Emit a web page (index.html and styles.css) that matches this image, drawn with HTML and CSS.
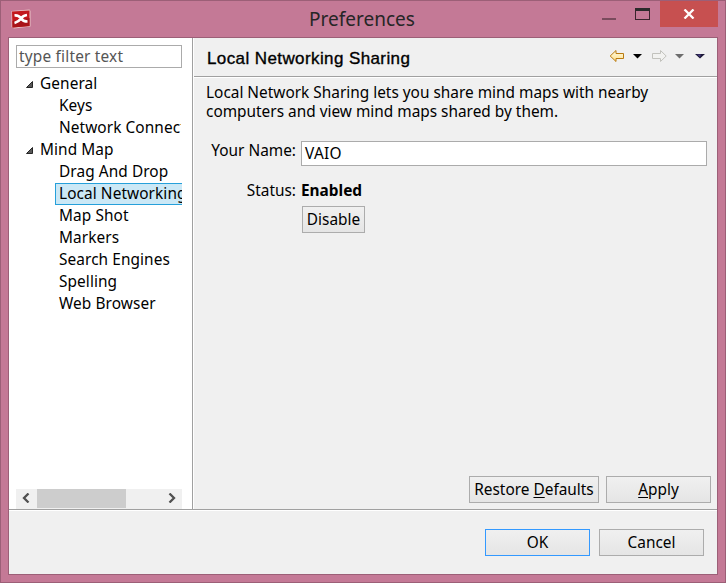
FILE: index.html
```html
<!DOCTYPE html>
<html lang="en">
<head>
<meta charset="utf-8">
<title>Preferences</title>
<link rel="stylesheet" href="styles.css">
</head>
<body>
<div class="window">
  <header class="titlebar">
    <svg class="app-icon" width="20" height="20" viewBox="0 0 20 20"><path d="M.5 2 18.500 .5 19.500 2V17.500L3 19.500 .5 18Z" fill="#e9c3c6"/><path d="M1 2.500 18.500 1.500V17L1.500 18.500Z" fill="#c3181d"/><path d="M1.500 12 18.500 9V17L1.500 18.500Z" fill="#a91319"/><path d="M3.500 6.500Q7.500 6 10 9.500Q12 12.500 16.500 12.500M3.500 14Q7.500 13 10 9.500Q12 6.500 16 6" fill="none" stroke="#fff" stroke-width="2.700"/></svg>
    <h1>Preferences</h1>
    <div class="controls">
      <span class="minimize"></span><span class="maximize"></span>
      <button class="close" aria-label="Close"><svg width="12" height="10" viewBox="0 0 12 10"><path d="M1.500 .5 10.500 9.500M10.500 .5 1.500 9.500" stroke="#fff" stroke-width="2.300"/></svg></button>
    </div>
  </header>
  <div class="client">
    <div class="upper">
      <aside class="sidebar">
        <div class="filter">type filter text</div>
        <ul class="tree">
          <li class="group"><svg width="7" height="7" viewBox="0 0 7 7"><path d="M6.500 .5V6.500H.5Z" fill="#595959" stroke="#262626"/></svg><span>General</span></li>
          <li><span>Keys</span></li>
          <li><span>Network Connections</span></li>
          <li class="group"><svg width="7" height="7" viewBox="0 0 7 7"><path d="M6.500 .5V6.500H.5Z" fill="#595959" stroke="#262626"/></svg><span>Mind Map</span></li>
          <li><span>Drag And Drop</span></li>
          <li class="selected"><span>Local Networking</span></li>
          <li><span>Map Shot</span></li>
          <li><span>Markers</span></li>
          <li><span>Search Engines</span></li>
          <li><span>Spelling</span></li>
          <li><span>Web Browser</span></li>
        </ul>
        <div class="scrollbar">
          <svg width="8" height="10" viewBox="0 0 8 10"><path d="M6.500 .5 2 5 6.500 9.500" fill="none" stroke="#505050" stroke-width="2.300"/></svg>
          <div class="thumb"></div>
          <svg width="8" height="10" viewBox="0 0 8 10"><path d="M1.500 .5 6 5 1.500 9.500" fill="none" stroke="#505050" stroke-width="2.300"/></svg>
        </div>
      </aside>
      <main class="page">
        <div class="page-head">
          <h2>Local Networking Sharing</h2>
          <svg width="98" height="14" viewBox="0 0 98 14"><defs><linearGradient id="gold" x2="0" y2="1"><stop stop-color="#fffbe4"/><stop offset="1" stop-color="#ffe08a"/></linearGradient></defs><path d="M.2 7 6 1.500V4.500H13.500V9.500H6V12.500Z" fill="url(#gold)" stroke="#b97a11"/><path d="M23 5H32L27.500 9.500Z" fill="#000"/><path d="M56.200 7 50.500 1.500V4.500H42.500V9.500H50.500V12.500Z" fill="#f2f2f0" stroke="#c2c2bd"/><path d="M65 5H74L69.500 9.500Z" fill="#6d6d6d"/><path d="M85 5H95L90 9.500Z" fill="#1c1838"/><path d="M87 5.500H91L90 8Z" fill="#493d86"/></svg>
        </div>
        <div class="content">
          <p>Local Network Sharing lets you share mind maps with nearby<br>computers and view mind maps shared by them.</p>
          <div class="form">
            <label>Your Name:</label><div class="field">VAIO</div>
            <span class="status">Status:</span><b>Enabled</b>
            <button class="btn disable">Disable</button>
          </div>
          <div class="actions"><button class="btn restore"><span>Restore <u>D</u>efaults</span></button><button class="btn"><span><u>A</u>pply</span></button></div>
        </div>
      </main>
    </div>
    <footer class="footer"><button class="btn ok">OK</button><button class="btn">Cancel</button></footer>
  </div>
</div>
</body>
</html>
```
FILE: styles.css
```css
* { box-sizing: border-box; }
body { margin: 0; font: 15.4px/22px "Noto Sans", sans-serif; color: #000; overflow: hidden; }
h1, h2, p, ul { margin: 0; padding: 0; }
button { font: inherit; color: inherit; padding: 0; }

.window { width: 726px; height: 583px; background: #c47996; border: 1px solid #9c5f77; padding: 0 7px 7px; }

.titlebar { height: 36px; display: grid; grid-template-columns: 150px 1fr 152px; }
.app-icon { margin: 8px 0 0 3px; }
h1 { font-weight: 400; font-size: 19px; line-height: 37px; text-align: center; color: #262626; }
.controls { display: flex; margin-left: 2px; }
.minimize { width: 14px; height: 2px; margin: 17px 0 0 34px; background: #7a4b5d; flex: none; }
.maximize { width: 15px; height: 12px; margin: 7px 0 0 19px; border: 1px solid #3a242c; border-top: 3px solid #2b2b2b; flex: none; }
.close { width: 58px; height: 26px; margin-left: 10px; border: 0; background: #c75050; display: flex; align-items: center; justify-content: center; flex: none; }

.client { height: 538px; border: 1px solid #9c5f77; background: #f0f0f0; }
.upper { height: 472px; border-bottom: 1px solid #a0a0a0; display: flex; }

.sidebar { width: 184px; background: #fff; border-right: 1px solid #a0a0a0; padding: 7px 10px 0 7px; display: flex; flex-direction: column; flex: none; }
.filter { height: 23px; border: 1px solid #ababab; padding-left: 2px; line-height: 22px; letter-spacing: .2px; color: #555; flex: none; }
.tree { list-style: none; margin-top: 5px; overflow: hidden; letter-spacing: .08px; }
.tree li { height: 22px; line-height: 20px; margin-left: 39px; border: 1px solid transparent; padding-left: 3px; white-space: nowrap; overflow: hidden; }
.tree .group { margin-left: 9px; padding: 0; display: flex; gap: 7px; }
.group svg { margin-top: 7px; }
.tree .selected { background: #cbe8f6; border-color: #26a0da; border-right: 0; }
.scrollbar { height: 20px; margin-top: auto; background: #f0f0f0; display: flex; align-items: center; padding: 0 6px 0 6px; }
.thumb { width: 89px; height: 19px; background: #cdcdcd; margin: 0 auto 1px 7px; }
.scrollbar svg { margin-bottom: 2px; }

.page { flex: 1; border-left: 1px solid #fff; display: flex; flex-direction: column; }
.page-head { height: 39px; border-bottom: 1px solid #a0a0a0; padding: 0 9px 0 13px; display: flex; justify-content: space-between; align-items: flex-start; }
.page-head svg { margin-top: 11px; }
h2 { font: 400 17px/42px "Liberation Sans", sans-serif; letter-spacing: .4px; -webkit-text-stroke: .35px #000; }
.content { flex: 1; border-top: 1px solid #fff; padding: 5px 6px 6px 12px; display: flex; flex-direction: column; }
p { line-height: 19px; white-space: nowrap; }
.form { display: grid; grid-template-columns: 90px 406px; column-gap: 5px; grid-template-rows: 25px 40px 27px; margin-top: 20px; }
.form label { text-align: right; line-height: 20px; }
.field { height: 25px; border: 1px solid #ababab; background: #fff; padding-left: 3px; line-height: 24px; letter-spacing: .3px; }
.status, b { margin-top: 14px; line-height: 22px; }
.status { text-align: right; }

.btn { width: 105px; height: 27px; border: 1px solid #acacac; background: linear-gradient(#f0f0f0, #e5e5e5); line-height: 22px; }
.disable { grid-column: 2; width: 63px; margin-left: 1px; }
.actions { display: flex; justify-content: flex-end; gap: 7px; margin-top: auto; }
.restore { width: 130px; }
u { text-underline-offset: 2px; text-decoration-thickness: 1px; text-decoration-skip-ink: none; }
.footer { height: 64px; border-top: 1px solid #fff; display: flex; justify-content: flex-end; gap: 9px; padding: 18px 13px 0 0; }
.ok { border-color: #3399ff; }
```
